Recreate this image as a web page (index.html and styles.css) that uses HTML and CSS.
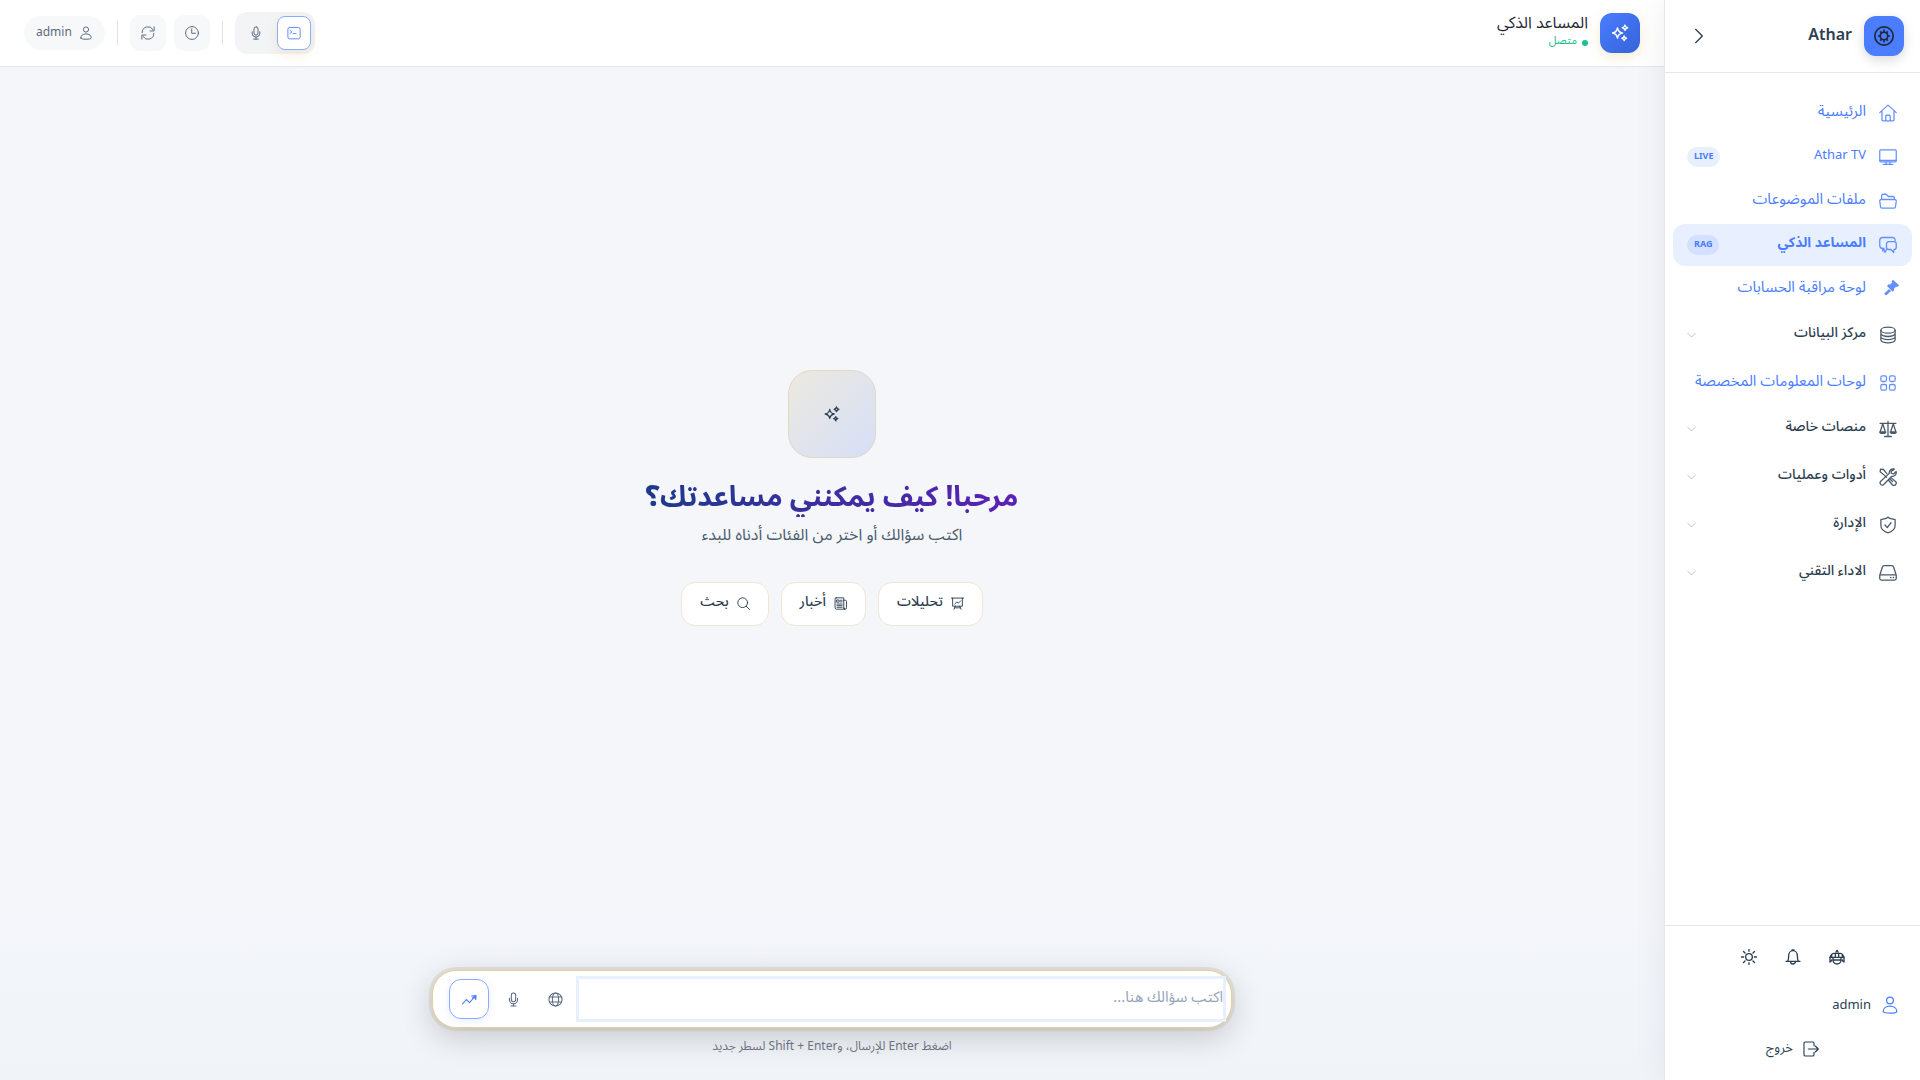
FILE: index.html
```html
<!DOCTYPE html>
<html lang="ar" dir="rtl">
<head>
    <meta charset="utf-8">
    <meta name="viewport" content="width=device-width, initial-scale=1">
    <title>Athar - المساعد الذكي</title>
    <link rel="stylesheet" href="styles.css">
</head>
<body>
    <!-- shared icons -->
    <svg class="sprite" aria-hidden="true">
        <symbol id="i-sparkles" viewBox="0 0 24 24">
            <path d="M9 6c.7 3.800 2.200 5.300 6 6-3.800.7-5.300 2.200-6 6-.7-3.800-2.200-5.300-6-6 3.800-.7 5.300-2.200 6-6zM18 2.500c.4 2 1.200 2.800 3.200 3.200-2 .4-2.800 1.200-3.200 3.200-.4-2-1.200-2.800-3.200-3.200 2-.4 2.800-1.200 3.200-3.200zM17 15.500c.3 1.800 1 2.500 2.800 2.800-1.800.3-2.500 1-2.800 2.800-.3-1.800-1-2.500-2.800-2.800 1.800-.3 2.500-1 2.800-2.800z"/>
        </symbol>
        <symbol id="i-mic" viewBox="0 0 24 24">
            <rect x="8.500" y="1.500" width="7" height="14" rx="3.500"/>
            <path d="M5.500 10v2.500a6.500 6.500 0 0 0 13 0V10M12 19v3.500M8 22.500h8"/>
        </symbol>
        <symbol id="i-user" viewBox="0 0 24 24">
            <circle cx="12" cy="6" r="4.500"/>
            <path d="M3 20.500c0-4 3.500-7 9-7s9 3 9 7c0 1.500-4 2.200-9 2.200s-9-.7-9-2.200z"/>
        </symbol>
        <symbol id="i-down" viewBox="0 0 24 24"><path d="M2 6l10 10L22 6"/></symbol>
    </svg>

    <div class="app">
        <aside class="sidebar">
            <div class="brand">
                <span class="brand-logo">
                    <svg viewBox="0 0 24 24"><circle cx="12" cy="12" r="11"/><circle cx="12" cy="12" r="4.500"/><path d="M12 5v2M12 17v2M5.500 12h2M16.500 12h2M8 7l1 1.500M16 7l-1 1.500M8 17l1-1.500M16 17l-1-1.500"/></svg>
                </span>
                <strong class="brand-name">Athar</strong>
                <button class="collapse" aria-label="طي القائمة">
                    <svg viewBox="0 0 24 24"><path d="M7 2l10 10L7 22"/></svg>
                </button>
            </div>

            <nav class="nav">
                <ul>
                    <li class="link"><a href="#">
                        <svg viewBox="0 0 24 24"><path d="M1 11.500L12 1.500l11 10M4 9v12a1.500 1.500 0 0 0 1.500 1.500h13A1.500 1.500 0 0 0 20 21V9M9 22v-5.500a1.500 1.500 0 0 1 1.500-1.500h3a1.500 1.500 0 0 1 1.500 1.500V22"/></svg>
                        <span>الرئيسية</span></a></li>
                    <li class="link"><a href="#">
                        <svg viewBox="0 0 24 24"><rect x="1" y="2.500" width="22" height="16" rx="1.500"/><path d="M9.500 18.500v3M14.500 18.500v3M5.500 21.800h13M1 16.500h22"/></svg>
                        <span lang="en">Athar TV</span><em class="badge">LIVE</em></a></li>
                    <li class="link"><a href="#">
                        <svg viewBox="0 0 24 24"><path d="M3.500 10V5A2 2 0 0 1 5.500 3h4l3 3h6a2 2 0 0 1 2 2v2M3 10h18a2 2 0 0 1 2 2.200l-1 7.500a2 2 0 0 1-2 1.800H4a2 2 0 0 1-2-1.800l-1-7.500A2 2 0 0 1 3 10z"/></svg>
                        <span>ملفات الموضوعات</span></a></li>
                    <li class="link active"><a href="#" aria-current="page">
                        <svg viewBox="0 0 24 24"><path d="M6.500 16.500L5 20v-3.500A4 4 0 0 1 1 12.500V6a4 4 0 0 1 4-4h12.500A4 4 0 0 1 21.500 4.500V6"/><path d="M13 7.500h7a3 3 0 0 1 3 3V15a3 3 0 0 1-3 3l-.5 4-3.500-4h-3a3 3 0 0 1-3-3v-4.500a3 3 0 0 1 3-3zM10 18l-2 4-2-5.500"/></svg>
                        <span>المساعد الذكي</span><em class="badge">RAG</em></a></li>
                    <li class="link"><a href="#">
                        <svg class="gavel" viewBox="0 0 24 24"><path d="M15 1l9 8.500-2.500 2.500-2-.3-3 3 .3 2.300-2.300 2L6 10.500 8.300 8l2.300.4 3-3-.6-2zM9 15l3 3-6 5.500a2 2 0 0 1-3-3z"/></svg>
                        <span>لوحة مراقبة الحسابات</span></a></li>
                    <li class="group"><button>
                        <svg viewBox="0 0 24 24"><ellipse cx="12" cy="5.500" rx="9.500" ry="4"/><path d="M2.500 5.500v13c0 2.200 4.300 4 9.500 4s9.500-1.800 9.500-4v-13M2.500 10c0 2.200 4.300 4 9.500 4s9.500-1.800 9.500-4M2.500 14.200c0 2.200 4.300 4 9.500 4s9.500-1.800 9.500-4"/></svg>
                        <span>مركز البيانات</span><svg class="arrow"><use href="#i-down"/></svg></button></li>
                    <li class="link"><a href="#">
                        <svg viewBox="0 0 24 24"><rect x="2.500" y="2.500" width="7.500" height="7.500" rx="2"/><rect x="14" y="2.500" width="7.500" height="7.500" rx="2"/><rect x="2.500" y="14" width="7.500" height="7.500" rx="2"/><rect x="14" y="14" width="7.500" height="7.500" rx="2"/></svg>
                        <span>لوحات المعلومات المخصصة</span></a></li>
                    <li class="group"><button>
                        <svg viewBox="0 0 24 24"><path d="M1.500 4.500h21M12 2v20M7.500 22h9M5 5L1.500 16M5 5l3.500 11M19 5l-3.500 11M19 5l3.500 11M1 16h8c-.5 2.500-7.500 2.500-8 0zM15 16h8c-.5 2.500-7.500 2.500-8 0z"/></svg>
                        <span>منصات خاصة</span><svg class="arrow"><use href="#i-down"/></svg></button></li>
                    <li class="group"><button>
                        <svg viewBox="0 0 24 24"><path d="M10.500 7.500L6 2 2 1.500 1.500 5l5.500 4.500 3 3M14 14l1.500-1.500 6.500 5.500a3 3 0 0 1-4.300 4.300L12.500 16zM14 14l4 4M20.500 1.500a5 5 0 0 0-6.700 5.700L2 18a3 3 0 0 0 4 4.300L17 11a5 5 0 0 0 5.800-6.300L19.500 8 16.500 7 16 4.500z"/></svg>
                        <span>أدوات وعمليات</span><svg class="arrow"><use href="#i-down"/></svg></button></li>
                    <li class="group"><button>
                        <svg viewBox="0 0 24 24"><path d="M12 1.500l2.500 1.800 7 1.400v8c0 4.500-4 8-9.500 9.800C6.500 20.700 2.500 17.200 2.500 12.700v-8l7-1.400zM8 12l3 3.500L16 9"/></svg>
                        <span>الإدارة</span><svg class="arrow"><use href="#i-down"/></svg></button></li>
                    <li class="group"><button>
                        <svg viewBox="0 0 24 24"><path d="M1 15L4.500 4A2.500 2.500 0 0 1 7 2.200h10A2.500 2.500 0 0 1 19.500 4L23 15v4a2.500 2.500 0 0 1-2.500 2.500h-17A2.500 2.500 0 0 1 1 19zM1 14.500h22M15.500 18h.5M19 18h.5"/></svg>
                        <span>الاداء التقني</span><svg class="arrow"><use href="#i-down"/></svg></button></li>
                </ul>
            </nav>

            <div class="side-footer">
                <div class="tools">
                    <button aria-label="المساعد"><svg viewBox="0 0 24 24"><path d="M4 9a3 3 0 0 1 3-2.500h10A3 3 0 0 1 20 9v3.500H4zM9.500 6.500v6M14.500 6.500v6M10.500 4.500L12 2l1.500 2.500M1 12.500h22M1.500 12.500v7c1.500-.5 2.500-1.500 2.500-3M22.500 12.500v7c-1.500-.5-2.500-1.500-2.500-3M1.500 12L4 8M22.500 12L20 8M6 13v4c0 3.500 3 5.500 6 5.500s6-2 6-5.500v-4M6.500 16.500h11"/></svg></button>
                    <button aria-label="الإشعارات"><svg viewBox="0 0 24 24"><path d="M1.500 18.500h21M4 18.500c1-2 1.500-4 1.500-8.500a6.500 7.500 0 0 1 13 0c0 4.500.5 6.500 1.500 8.500M10.500 1.500h3M8.500 19a3.500 3.500 0 0 0 7 0"/></svg></button>
                    <button aria-label="المظهر"><svg viewBox="0 0 24 24"><circle cx="12" cy="12" r="5"/><path d="M12 .8v2.700M12 20.500v2.700M.8 12H4M20 12h3.200M3.800 3.800L6 6M18 18l2.200 2.200M3.800 20.200L6 18M18 6l2.200-2.200"/></svg></button>
                </div>
                <a class="account" href="#"><svg><use href="#i-user"/></svg><span>admin</span></a>
                <button class="logout">
                    <svg viewBox="0 0 24 24"><path d="M16.500 7V3.500a2 2 0 0 0-2-2h-11a2 2 0 0 0-2 2v17a2 2 0 0 0 2 2h11a2 2 0 0 0 2-2V17M8 12h15M18.500 7.500L23 12l-4.500 4.500"/></svg>
                    <span>خروج</span>
                </button>
            </div>
        </aside>

        <div class="page">
            <header class="topbar">
                <div class="assistant">
                    <span class="assistant-icon"><svg><use href="#i-sparkles"/></svg></span>
                    <div class="assistant-text">
                        <h2>المساعد الذكي</h2>
                        <p class="status"><i></i>متصل</p>
                    </div>
                </div>

                <div class="actions">
                    <div class="modes">
                        <button class="on" aria-label="محادثة نصية"><svg viewBox="0 0 24 24"><rect x="1.500" y="2.500" width="21" height="19.500" rx="3"/><path d="M5 7.500l3.500 2.800L5 13M10.500 13h5"/></svg></button>
                        <button aria-label="محادثة صوتية"><svg><use href="#i-mic"/></svg></button>
                    </div>
                    <span class="divider"></span>
                    <button class="round" aria-label="السجل"><svg viewBox="0 0 24 24"><circle cx="12" cy="12" r="11"/><path d="M11.500 5v7.500H18"/></svg></button>
                    <button class="round" aria-label="تحديث"><svg viewBox="0 0 24 24"><path d="M2 11.500A10 10 0 0 1 20.500 6M22 12.500A10 10 0 0 1 3.500 18M22.500 1.500v7h-7M1.500 22.500v-7h7"/></svg></button>
                    <span class="divider"></span>
                    <div class="user"><svg><use href="#i-user"/></svg><span>admin</span></div>
                </div>
            </header>

            <main class="welcome">
                <div class="welcome-icon"><svg><use href="#i-sparkles"/></svg></div>
                <h1>مرحبا! كيف يمكنني مساعدتك؟</h1>
                <p>اكتب سؤالك أو اختر من الفئات أدناه للبدء</p>
                <div class="chips">
                    <button><svg viewBox="0 0 24 24"><path d="M.5 2h23M3 2v15h18V2M7 13l4-4 2.500 2.500L18 7M8 17l-2.500 5.500M16 17l2.500 5.500M7 20h10"/></svg><span>تحليلات</span></button>
                    <button><svg viewBox="0 0 24 24"><path d="M4 1.500h14v18.500a2.500 2.500 0 0 0 2.500 2.500H5A3 3 0 0 1 2 19.500v-16a2 2 0 0 1 2-2zM18 6h3a2 2 0 0 1 2 2v12a2.500 2.500 0 0 1-5 0M5.500 5.500h4v4h-4zM12 6h3M12 9h3M5.500 13H15M5.500 16H15M5.500 19H15"/></svg><span>أخبار</span></button>
                    <button><svg viewBox="0 0 24 24"><circle cx="10.500" cy="10.500" r="9"/><path d="M17 17l6 6"/></svg><span>بحث</span></button>
                </div>
            </main>

            <footer class="ask">
                <form class="composer">
                    <textarea rows="1" placeholder="اكتب سؤالك هنا..." aria-label="سؤالك"></textarea>
                    <button type="button" aria-label="اللغة"><svg viewBox="0 0 24 24"><circle cx="12" cy="12" r="10.500"/><ellipse cx="12" cy="12" rx="5" ry="10.500"/><path d="M2.500 8h19M2.500 16h19"/></svg></button>
                    <button type="button" aria-label="تسجيل صوتي"><svg><use href="#i-mic"/></svg></button>
                    <button type="button" class="send" aria-label="إرسال"><svg viewBox="0 0 24 24"><path d="M1 19l6-7 5 5 8-9M15.500 6.500l7-1-.5 7M16.500 9.500l4-2.500.5 4"/></svg></button>
                </form>
                <p class="hint">اضغط Enter للإرسال، وShift + Enter لسطر جديد</p>
            </footer>
        </div>
    </div>
</body>
</html>
```
FILE: styles.css
```css
:root {
    --primary: #4a7dff;
    --ink: #2c3e50;
    --muted: #5b6b7f;
    --gold: #e3cfa4;
    --line: #e5e7eb;
}

* {
    margin: 0;
    padding: 0;
    box-sizing: border-box;
}

body {
    font-family: "Noto Sans", "Noto Sans Arabic", sans-serif;
    font-size: 14px;
    color: var(--ink);
}

button, textarea {
    font: inherit;
    color: inherit;
    border: none;
    background: none;
}

button {
    cursor: pointer;
}

a {
    color: inherit;
    text-decoration: none;
}

ul {
    list-style: none;
}

svg {
    width: 16px;
    height: 16px;
    flex-shrink: 0;
    fill: none;
    stroke: currentColor;
    stroke-width: 1.7;
    stroke-linecap: round;
    stroke-linejoin: round;
}

.sprite {
    display: none;
}

.app {
    display: flex;
    height: 100vh;
}

/* sidebar */
.sidebar {
    width: 256px;
    flex-shrink: 0;
    display: flex;
    flex-direction: column;
    background: #fff;
    border-left: 1px solid var(--line);
    box-shadow: 0 0 32px rgba(15, 23, 42, 0.07);
    z-index: 1;
}

.brand {
    display: flex;
    align-items: center;
    gap: 12px;
    padding: 16px;
    border-bottom: 1px solid var(--line);
}

.brand-logo {
    width: 40px;
    height: 40px;
    display: grid;
    place-items: center;
    border-radius: 12px;
    background: var(--primary);
    color: #1f2937;
    box-shadow: 0 4px 12px rgba(0, 0, 0, 0.15);
}

.brand-logo svg {
    width: 20px;
    height: 20px;
    stroke-width: 2;
}

.brand-name {
    flex: 1;
    font-size: 16px;
    line-height: 24px;
    font-weight: 600;
    padding-bottom: 4px;
}

.collapse {
    width: 36px;
    height: 36px;
    display: grid;
    place-items: center;
}

.collapse svg {
    stroke-width: 2;
}

.nav {
    flex: 1;
    padding: 19px 8px;
}

.nav li + li {
    margin-top: 2px;
}

.nav .group + .link {
    margin-top: 4px;
}

.nav a, .nav button {
    width: 100%;
    height: 42px;
    display: flex;
    align-items: center;
    gap: 13px;
    padding: 0 15px 0 14px;
    border-radius: 12px;
    font-size: 15px;
    line-height: 20px;
    text-align: right;
}

.nav button {
    height: 46px;
    font-size: 14px;
    font-weight: 500;
}

.nav svg {
    width: 18px;
    height: 18px;
    opacity: 0.85;
}

.nav span {
    flex: 1;
    padding-bottom: 6px;
    white-space: nowrap;
}

.nav span[lang="en"] {
    font-size: 13px;
}

.link {
    color: var(--primary);
}

.nav .gavel {
    fill: currentColor;
    stroke: none;
    width: 16px;
    height: 16px;
    margin: 0 -2px 4px 4px;
}

.nav .arrow {
    width: 9px;
    height: 9px;
    color: #8b93a0;
}

.nav .active a {
    background: #e8f0ff;
    font-size: 14px;
    font-weight: 700;
}

.badge {
    padding: 2px 7px 4px;
    border-radius: 10px;
    background: #e8f0ff;
    font-size: 9px;
    line-height: 14px;
    font-style: normal;
    font-weight: 700;
}

.active .badge {
    background: #d3e0ff;
}

.side-footer {
    display: flex;
    flex-direction: column;
    padding: 13px 8px 9px;
    border-top: 1px solid var(--line);
}

.tools {
    display: flex;
    justify-content: center;
    gap: 8px;
    margin-bottom: 8px;
}

.tools button {
    width: 36px;
    height: 36px;
    display: grid;
    place-items: center;
}

.tools svg {
    stroke-width: 2;
}

.account, .logout {
    height: 44px;
    display: flex;
    align-items: center;
    gap: 10px;
    font-size: 13px;
}

.account {
    padding: 0 13px;
}

.account svg {
    width: 18px;
    height: 18px;
    color: var(--primary);
}

.logout {
    justify-content: center;
}

.account span, .logout span {
    padding-bottom: 2px;
}

/* page */
.page {
    flex: 1;
    min-width: 0;
    display: flex;
    flex-direction: column;
    background: linear-gradient(180deg, #f4f6fa 80%, #f0f4f9);
}

.topbar {
    display: flex;
    align-items: center;
    justify-content: space-between;
    padding: 12px 24px;
    background: #fff;
    border-bottom: 1px solid var(--line);
}

.assistant {
    display: flex;
    align-items: center;
    gap: 12px;
}

.assistant-icon {
    width: 40px;
    height: 40px;
    display: grid;
    place-items: center;
    border-radius: 12px;
    color: #fff;
    background: linear-gradient(135deg, #4a7dff, #3563d8);
    box-shadow: 0 4px 12px rgba(212, 175, 85, 0.25);
}

.assistant-icon svg {
    width: 20px;
    height: 20px;
}

.assistant-text {
    padding-bottom: 6px;
}

.assistant h2 {
    font-size: 16px;
    font-weight: 400;
    line-height: 20px;
    color: #1f2937;
}

.status {
    display: flex;
    align-items: center;
    gap: 5px;
    font-size: 11px;
    line-height: 16px;
    color: #10c08a;
}

.status i {
    width: 6px;
    height: 6px;
    margin-top: 6px;
    border-radius: 50%;
    background: #1cc191;
}

.actions {
    display: flex;
    align-items: center;
    gap: 8px;
    color: var(--muted);
}

.actions svg {
    width: 14px;
    height: 14px;
}

.actions button {
    display: grid;
    place-items: center;
}

.modes {
    display: flex;
    gap: 4px;
    padding: 4px;
    border-radius: 12px;
    background: #f3f4f6;
}

.modes button {
    width: 34px;
    height: 34px;
    border-radius: 8px;
}

.modes .on {
    color: #5f8cff;
    background: #fff;
    border: 1px solid #8aabff;
    box-shadow: 0 4px 12px rgba(212, 175, 85, 0.2);
}

.divider {
    width: 1px;
    height: 24px;
    margin: 0 4px;
    background: #dfe2e7;
}

.round {
    width: 36px;
    height: 36px;
    border-radius: 10px;
    background: #f7f8fa;
}

.user {
    height: 34px;
    display: flex;
    align-items: center;
    gap: 7px;
    padding: 0 12px;
    border-radius: 17px;
    background: #f7f8fa;
    font-size: 12px;
}

.user span {
    padding-bottom: 3px;
}

.welcome {
    flex: 1;
    display: flex;
    flex-direction: column;
    align-items: center;
    justify-content: center;
}

.welcome-icon {
    width: 88px;
    height: 88px;
    display: grid;
    place-items: center;
    margin-bottom: 15px;
    border: 1px solid #e3d8c2;
    border-radius: 24px;
    background: linear-gradient(135deg, #ece9df, #d6dff8);
}

.welcome-icon svg {
    width: 18px;
    height: 18px;
}

.welcome h1 {
    font-size: 28px;
    line-height: 44px;
    background: linear-gradient(270deg, #5b21b6, #1e3a8a);
    -webkit-background-clip: text;
    background-clip: text;
    color: transparent;
}

.welcome p {
    margin: 5px 0 36px;
    font-size: 16px;
    line-height: 24px;
    color: #4b5b6e;
}

.chips {
    display: flex;
    gap: 12px;
}

.chips button {
    height: 44px;
    display: flex;
    align-items: center;
    gap: 8px;
    padding: 0 18px;
    border: 1px solid #f0e6d2;
    border-radius: 14px;
    background: #fff;
    font-size: 14px;
    font-weight: 500;
}

.chips svg {
    width: 13px;
    height: 13px;
}

.chips span {
    padding-bottom: 4px;
}

.ask {
    padding: 42px 24px 26px;
}

.composer {
    max-width: 800px;
    display: flex;
    align-items: center;
    gap: 6px;
    margin: 0 auto 10px;
    padding: 8px 8px 8px 16px;
    border: 1px solid var(--gold);
    border-radius: 24px;
    background: #fff;
    box-shadow: 0 0 0 3px rgba(190, 165, 110, 0.22), 0 8px 32px rgba(0, 0, 0, 0.2);
}

.composer textarea {
    flex: 1;
    height: 40px;
    padding: 5px 0;
    font-size: 15px;
    line-height: 24px;
    outline: none;
    resize: none;
    box-shadow: 0 0 0 3px #e8f0ff;
}

.composer textarea::placeholder {
    color: #94a3b8;
}

.composer button {
    width: 36px;
    height: 36px;
    display: grid;
    place-items: center;
    color: var(--muted);
}

.composer button svg {
    width: 15px;
    height: 15px;
}

.composer .send {
    width: 40px;
    height: 40px;
    border: 1px solid #8aabff;
    border-radius: 12px;
    color: var(--primary);
    box-shadow: 0 2px 8px rgba(74, 125, 255, 0.12);
}

.hint {
    text-align: center;
    font-size: 12px;
    line-height: 16px;
    color: #6b7280;
}
```
